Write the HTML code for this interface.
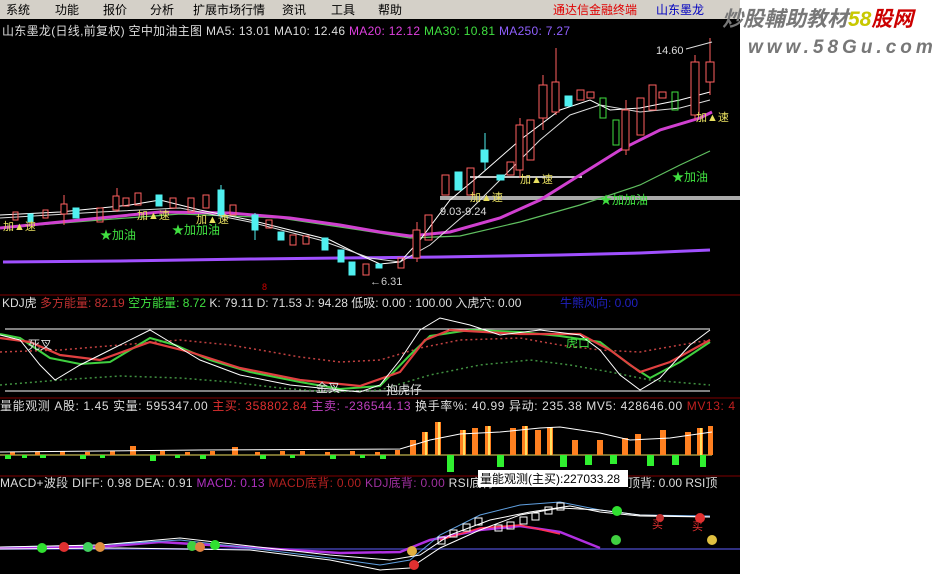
<!DOCTYPE html>
<html><head><meta charset="utf-8">
<style>
html,body{margin:0;padding:0;background:#fff;width:942px;height:574px;overflow:hidden}
svg{display:block}
text{font-family:"Liberation Sans","Noto Sans CJK SC","WenQuanYi Zen Hei",sans-serif;font-size:11px}
.t{font-size:12px}
</style></head><body>
<svg width="942" height="574" viewBox="0 0 942 574" xmlns="http://www.w3.org/2000/svg">
<rect x="0" y="0" width="942" height="574" fill="#fff"/>
<rect x="0" y="0" width="740" height="19" fill="#d4d0c8"/>
<rect x="0" y="19" width="740" height="555" fill="#000"/>
<g fill="#000">
<text x="6" y="14" class="t">系统</text>
<text x="55" y="14" class="t">功能</text>
<text x="103" y="14" class="t">报价</text>
<text x="150" y="14" class="t">分析</text>
<text x="193" y="14" class="t">扩展市场行情</text>
<text x="282" y="14" class="t">资讯</text>
<text x="331" y="14" class="t">工具</text>
<text x="378" y="14" class="t">帮助</text>
<text x="553" y="14" fill="#e00000" class="t">通达信金融终端</text>
<text x="656" y="14" fill="#0000c0" class="t">山东墨龙</text>
</g>
<text x="722" y="26" fill="#777" style="font-size:21px;font-style:italic;font-weight:bold">炒股輔助教材<tspan fill="#c8c800">58</tspan><tspan fill="#c00">股网</tspan></text>
<text x="748" y="53" fill="#777" style="font-size:19px;font-style:italic;font-weight:bold;letter-spacing:4px">www.58Gu.com</text>

<g stroke="#800000" stroke-width="1">
<line x1="0" y1="295" x2="740" y2="295"/>
<line x1="0" y1="398" x2="740" y2="398"/>
<line x1="0" y1="476" x2="740" y2="476"/>
</g>

<text x="2" y="35" fill="#ddd" class="t" style="letter-spacing:0.3px">山东墨龙(日线,前复权) 空中加油主图  MA5: 13.01  MA10: 12.46 <tspan fill="#e040e0">MA20: 12.12</tspan> <tspan fill="#40e040">MA30: 10.81</tspan> <tspan fill="#9060ff">MA250: 7.27</tspan></text>

<rect x="440" y="196" width="300" height="4" fill="#aaa"/>
<line x1="470" y1="177" x2="582" y2="177" stroke="#fff" stroke-width="1.5"/>
<polyline fill="none" stroke="#a050ff" stroke-width="3" points="3,262 120,261 250,259 340,258 440,257 560,255 640,253 710,250"/>
<polyline fill="none" stroke="#60c060" stroke-width="1.2" points="0,228 100,220 180,214 280,218 360,230 410,238 460,236 520,222 580,205 640,185 680,165 710,151"/>
<polyline fill="none" stroke="#d040d0" stroke-width="3" points="0,228 100,218 160,212 230,213 290,218 340,225 380,232 410,236 450,232 500,218 540,200 580,175 620,150 660,130 700,118 712,112"/>
<polyline fill="none" stroke="#fff" stroke-width="1" points="0,215 60,212 130,205 160,200 200,210 250,220 290,230 330,240 360,255 380,264 400,262 420,240 450,200 480,175 520,140 560,110 590,100 610,110 640,108 680,100 710,92"/>
<polyline fill="none" stroke="#ddd" stroke-width="1" points="0,218 100,212 180,208 250,222 320,240 370,258 400,262 430,245 470,210 510,170 540,140 570,115 600,105 640,112 680,108 710,100"/>

<g stroke-width="1">
<g stroke="#ff6060" fill="none">
<rect x="13" y="212" width="5" height="8"/><rect x="43" y="210" width="5" height="8"/>
<line x1="64" y1="195" x2="64" y2="225"/><rect x="61" y="204" width="6" height="10" fill="#000"/>
<rect x="97" y="208" width="6" height="14"/>
<line x1="117" y1="188" x2="117" y2="212"/><rect x="113" y="196" width="6" height="14" fill="#000"/>
<rect x="123" y="198" width="6" height="8"/><rect x="135" y="193" width="6" height="12"/>
<rect x="170" y="198" width="6" height="10"/><rect x="188" y="198" width="6" height="14"/>
<rect x="203" y="195" width="6" height="13"/><rect x="230" y="205" width="6" height="10"/>
<rect x="266" y="220" width="6" height="8"/><rect x="290" y="235" width="6" height="10"/>
<rect x="303" y="236" width="6" height="8"/><rect x="363" y="264" width="6" height="11"/>
<rect x="398" y="258" width="6" height="10"/>
<line x1="417" y1="222" x2="417" y2="262"/><rect x="413" y="230" width="7" height="28" fill="#000"/>
<rect x="425" y="215" width="7" height="25"/><rect x="442" y="175" width="7" height="20"/>
<rect x="467" y="168" width="7" height="27"/>
<rect x="507" y="162" width="7" height="13"/>
<line x1="520" y1="118" x2="520" y2="178"/><rect x="516" y="125" width="7" height="45" fill="#000"/>
<rect x="527" y="120" width="7" height="40"/>
<line x1="543" y1="75" x2="543" y2="130"/><rect x="539" y="85" width="8" height="33" fill="#000"/>
<line x1="556" y1="48" x2="556" y2="115"/><rect x="552" y="82" width="7" height="30" fill="#000"/>
<rect x="577" y="90" width="7" height="10"/><rect x="587" y="92" width="7" height="6"/>
<line x1="626" y1="100" x2="626" y2="155"/><rect x="622" y="110" width="7" height="40" fill="#000"/>
<rect x="637" y="98" width="7" height="37"/><rect x="649" y="85" width="7" height="25"/>
<rect x="659" y="92" width="7" height="6"/>
<line x1="695" y1="55" x2="695" y2="120"/><rect x="691" y="62" width="8" height="53" fill="#000"/>
<line x1="710" y1="38" x2="710" y2="95"/><rect x="706" y="62" width="8" height="20" fill="#000"/>
</g>
<g fill="#50f0f0" stroke="#50f0f0">
<rect x="28" y="214" width="5" height="8"/><rect x="73" y="208" width="6" height="10"/>
<rect x="156" y="195" width="6" height="11"/><line x1="221" y1="185" x2="221" y2="218"/><rect x="218" y="190" width="6" height="25"/>
<rect x="252" y="215" width="6" height="15"/><line x1="255" y1="213" x2="255" y2="240"/>
<rect x="278" y="232" width="6" height="8"/><rect x="322" y="238" width="6" height="12"/>
<rect x="338" y="250" width="6" height="12"/><rect x="349" y="262" width="6" height="13"/>
<rect x="376" y="264" width="6" height="4"/><rect x="455" y="172" width="7" height="18"/>
<line x1="485" y1="133" x2="485" y2="170"/><rect x="481" y="150" width="7" height="12"/>
<rect x="497" y="175" width="7" height="5"/><rect x="565" y="96" width="7" height="10"/>
</g>
<g fill="none" stroke="#40e040">
<rect x="600" y="98" width="6" height="20"/><rect x="613" y="120" width="6" height="25"/>
<rect x="672" y="92" width="6" height="18"/>
</g>
</g>

<g>
<text x="656" y="54" fill="#ddd">14.60</text>
<line x1="686" y1="49" x2="712" y2="42" stroke="#ddd"/>
<text x="370" y="285" fill="#ccc">←6.31</text>
<text x="440" y="215" fill="#ddd">9.03-9.24</text>
<text x="3" y="230" fill="#e8e060">加▲速</text>
<text x="137" y="219" fill="#e8e060">加▲速</text>
<text x="196" y="223" fill="#e8e060">加▲速</text>
<text x="470" y="201" fill="#e8e060">加▲速</text>
<text x="520" y="183" fill="#e8e060">加▲速</text>
<text x="696" y="121" fill="#e8e060">加▲速</text>
<text x="100" y="239" fill="#40e040" class="t">★加油</text>
<text x="172" y="234" fill="#40e040" class="t">★加加油</text>
<text x="600" y="204" fill="#40e040" class="t">★加加油</text>
<text x="672" y="181" fill="#40e040" class="t">★加油</text>
<text x="262" y="290" fill="#c00" style="font-size:9px">8</text>
</g>

<text x="2" y="307" fill="#ddd" class="t">KDJ虎 <tspan fill="#c03030">多方能量: 82.19</tspan> <tspan fill="#40e040">空方能量: 8.72</tspan>  K: 79.11  D: 71.53  J: 94.28  低吸: 0.00 : 100.00  入虎穴: 0.00</text>
<text x="560" y="307" fill="#2020c0" class="t">牛熊风向: 0.00</text>
<line x1="5" y1="329" x2="710" y2="329" stroke="#fff"/>
<line x1="5" y1="391" x2="710" y2="391" stroke="#fff"/>
<polyline fill="none" stroke="#c04040" stroke-dasharray="2,3" stroke-width="1.5" points="0,352 60,350 120,345 180,340 230,345 260,350 300,357 340,362 380,360 420,348 460,340 520,338 560,345 600,350 640,352 680,345 710,340"/>
<polyline fill="none" stroke="#409040" stroke-dasharray="2,3" stroke-width="1.5" points="0,385 60,380 120,376 180,378 230,382 280,388 330,392 380,390 430,375 480,365 530,360 570,365 610,372 650,380 710,385"/>
<polyline fill="none" stroke="#40d040" stroke-width="2" points="0,334 20,338 50,358 80,364 110,362 150,338 175,345 210,360 250,372 300,382 340,389 380,386 410,355 430,336 470,330 520,332 560,336 600,342 630,365 650,378 680,362 710,342"/>
<polyline fill="none" stroke="#e04040" stroke-width="2.2" points="0,338 30,342 60,355 100,360 150,342 190,352 240,368 300,380 360,386 400,372 425,340 450,330 520,334 580,334 610,350 640,372 670,362 710,340"/>
<polyline fill="none" stroke="#fff" stroke-width="1" points="0,335 20,340 40,365 55,380 80,365 110,350 150,330 175,345 200,360 240,375 290,385 320,388 360,392 380,385 400,360 420,330 440,318 470,325 500,335 540,330 580,335 600,350 620,375 640,390 660,378 690,345 710,330"/>
<text x="28" y="349" fill="#ddd" class="t">死叉</text>
<text x="316" y="392" fill="#ddd" class="t">金叉</text>
<text x="386" y="394" fill="#ddd" class="t">抱虎仔</text>
<text x="566" y="347" fill="#40e040" class="t">虎口</text>

<text x="0" y="410" fill="#ddd" class="t" style="letter-spacing:0.6px">量能观测  A股: 1.45  实量: 595347.00  <tspan fill="#e03030">主买: 358802.84</tspan>  <tspan fill="#c040c0">主卖: -236544.13</tspan>  换手率%: 40.99     异动: 235.38   MV5: 428646.00 <tspan fill="#c02020">MV13: 4</tspan></text>
<line x1="0" y1="455" x2="712" y2="455" stroke="#f0e060"/>
<g fill="#ff8020">
<rect x="10" y="452" width="5" height="3"/><rect x="35" y="452" width="5" height="3"/><rect x="60" y="451" width="5" height="4"/><rect x="85" y="452" width="5" height="3"/><rect x="110" y="451" width="5" height="4"/><rect x="130" y="446" width="6" height="9"/><rect x="160" y="451" width="5" height="4"/><rect x="185" y="452" width="5" height="3"/><rect x="210" y="451" width="5" height="4"/>
<rect x="232" y="447" width="6" height="8"/><rect x="255" y="452" width="5" height="3"/><rect x="280" y="451" width="5" height="4"/><rect x="300" y="451" width="5" height="4"/><rect x="325" y="452" width="5" height="3"/><rect x="350" y="451" width="5" height="4"/><rect x="375" y="452" width="5" height="3"/><rect x="395" y="450" width="5" height="5"/>
<rect x="410" y="440" width="6" height="15"/><rect x="422" y="432" width="6" height="23"/><rect x="435" y="422" width="6" height="33"/>
<rect x="460" y="430" width="6" height="25"/><rect x="472" y="428" width="6" height="27"/><rect x="485" y="426" width="6" height="29"/>
<rect x="510" y="428" width="6" height="27"/><rect x="522" y="426" width="6" height="29"/><rect x="535" y="430" width="6" height="25"/>
<rect x="547" y="427" width="6" height="28"/><rect x="572" y="440" width="6" height="15"/><rect x="597" y="440" width="6" height="15"/>
<rect x="622" y="438" width="6" height="17"/><rect x="635" y="434" width="6" height="21"/><rect x="660" y="430" width="6" height="25"/>
<rect x="685" y="432" width="6" height="23"/><rect x="697" y="428" width="6" height="27"/><rect x="708" y="426" width="5" height="29"/>
</g>
<g fill="#ffe060">
<rect x="425" y="432" width="2" height="23"/><rect x="438" y="422" width="2" height="33"/><rect x="463" y="430" width="2" height="25"/><rect x="488" y="426" width="2" height="29"/><rect x="525" y="426" width="2" height="29"/><rect x="550" y="427" width="2" height="28"/><rect x="700" y="428" width="2" height="27"/>
</g>
<g fill="#30f030">
<rect x="5" y="455" width="6" height="4"/><rect x="22" y="455" width="5" height="3"/><rect x="40" y="455" width="6" height="3"/><rect x="80" y="455" width="6" height="4"/><rect x="100" y="455" width="5" height="3"/><rect x="150" y="455" width="6" height="6"/><rect x="175" y="455" width="5" height="3"/><rect x="200" y="455" width="6" height="4"/><rect x="260" y="455" width="6" height="4"/><rect x="290" y="455" width="5" height="3"/>
<rect x="330" y="455" width="6" height="4"/><rect x="360" y="455" width="5" height="3"/><rect x="380" y="455" width="6" height="4"/>
<rect x="447" y="455" width="7" height="17"/><rect x="497" y="455" width="7" height="12"/><rect x="560" y="455" width="7" height="12"/>
<rect x="585" y="455" width="7" height="10"/><rect x="610" y="455" width="7" height="9"/><rect x="647" y="455" width="7" height="11"/><rect x="672" y="455" width="7" height="10"/><rect x="700" y="455" width="6" height="12"/>
</g>
<polyline fill="none" stroke="#fff" stroke-width="1" points="0,452 200,450 400,449 430,440 460,434 500,432 540,428 560,427 600,433 630,440 670,438 712,432"/>

<text x="0" y="487" fill="#ddd" class="t" style="letter-spacing:0.3px">MACD+波段  DIFF: 0.98  DEA: 0.91  <tspan fill="#b030c0">MACD: 0.13</tspan>  <tspan fill="#b02020">MACD底背: 0.00</tspan>  <tspan fill="#a030a0">KDJ底背: 0.00</tspan>  RSI底背</text>
<text x="628" y="487" fill="#ddd" class="t">顶背: 0.00  RSI顶</text>
<rect x="478" y="470" width="150" height="17" fill="#fff"/>
<text x="480" y="483" fill="#000" class="t">量能观测(主买):227033.28</text>
<line x1="0" y1="549" x2="740" y2="549" stroke="#303080" stroke-width="2"/>
<polyline fill="none" stroke="#b030e0" stroke-width="2.5" points="0,548 100,547 160,542 260,548 340,553 400,552 430,540 480,530 520,526 560,532 600,548"/>
<polyline fill="none" stroke="#ff3050" stroke-width="1.5" points="440,540 480,528 520,525 560,534"/>
<polyline fill="none" stroke="#60a0e0" stroke-width="1" points="0,547 100,545 180,540 250,548 330,558 380,565 410,560 440,535 480,515 520,505 560,502 600,510 640,515 710,516"/>
<polyline fill="none" stroke="#fff" stroke-width="1" points="0,547 100,545 180,538 250,546 330,555 390,560 420,555 450,535 490,520 530,512 570,506 600,512 640,516 710,517"/>
<polyline fill="none" stroke="#fff" stroke-width="1" points="0,549 120,548 250,550 330,560 380,570 410,568 440,548 480,530 520,515 560,508 600,510 640,515 710,517"/>
<g fill="none" stroke="#fff">
<rect x="438" y="537" width="7" height="7"/><rect x="450" y="530" width="7" height="7"/><rect x="463" y="524" width="7" height="7"/><rect x="475" y="518" width="7" height="7"/>
<rect x="495" y="525" width="7" height="6"/><rect x="507" y="522" width="7" height="7"/><rect x="520" y="517" width="7" height="7"/><rect x="532" y="513" width="7" height="7"/><rect x="545" y="507" width="7" height="7"/><rect x="557" y="503" width="7" height="7"/>
</g>
<g>
<circle cx="42" cy="548" r="5" fill="#30e030"/><circle cx="64" cy="547" r="5" fill="#e03030"/><circle cx="88" cy="547" r="5" fill="#40d060"/><circle cx="100" cy="547" r="5" fill="#e09040"/>
<circle cx="192" cy="546" r="5" fill="#40d040"/><circle cx="200" cy="547" r="5" fill="#e08040"/><circle cx="215" cy="545" r="5" fill="#30e030"/>
<circle cx="412" cy="551" r="5" fill="#e0b040"/><circle cx="414" cy="565" r="5" fill="#e03030"/>
<circle cx="617" cy="511" r="5" fill="#30e030"/><circle cx="616" cy="540" r="5" fill="#40d040"/><circle cx="660" cy="518" r="4" fill="#c03030"/><circle cx="700" cy="518" r="5" fill="#e03030"/><circle cx="712" cy="540" r="5" fill="#e0c040"/>
</g>
<text x="652" y="528" fill="#e03030">买</text>
<text x="692" y="530" fill="#e03030">买</text>
</svg>
</body></html>
